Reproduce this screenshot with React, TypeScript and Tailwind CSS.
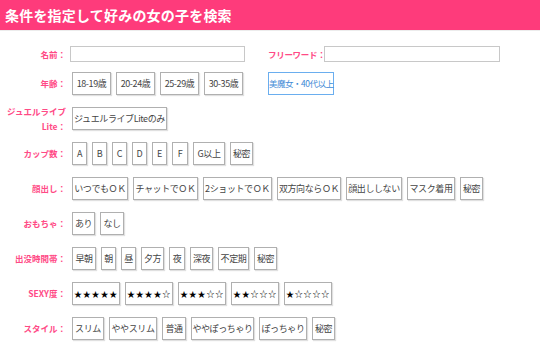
type Opt = { label: string; w: string };

const font = { fontFamily: '"Noto Sans CJK JP", "Noto Sans", sans-serif' };

const rows: { label: React.ReactNode; options: Opt[] }[] = [
  {
    label: (
      <>
        ジュエルライブ
        <br />
        Lite：
      </>
    ),
    options: [{ label: "ジュエルライブLiteのみ", w: "w-[95px]" }],
  },
  {
    label: "カップ数：",
    options: [
      { label: "A", w: "w-[15px]" },
      { label: "B", w: "w-[15px]" },
      { label: "C", w: "w-[15px]" },
      { label: "D", w: "w-[15px]" },
      { label: "E", w: "w-[15px]" },
      { label: "F", w: "w-[16px]" },
      { label: "G以上", w: "w-[32px]" },
      { label: "秘密", w: "w-[23px]" },
    ],
  },
  {
    label: "顔出し：",
    options: [
      { label: "いつでもＯＫ", w: "w-[56px]" },
      { label: "チャットでＯＫ", w: "w-[65px]" },
      { label: "2ショットでＯＫ", w: "w-[69px]" },
      { label: "双方向ならＯＫ", w: "w-[64px]" },
      { label: "顔出ししない", w: "w-[56px]" },
      { label: "マスク着用", w: "w-[48px]" },
      { label: "秘密", w: "w-[23px]" },
    ],
  },
  {
    label: "おもちゃ：",
    options: [
      { label: "あり", w: "w-[23px]" },
      { label: "なし", w: "w-[24px]" },
    ],
  },
  {
    label: "出没時間帯：",
    options: [
      { label: "早朝", w: "w-[24px]" },
      { label: "朝", w: "w-[15px]" },
      { label: "昼", w: "w-[15px]" },
      { label: "夕方", w: "w-[23px]" },
      { label: "夜", w: "w-[16px]" },
      { label: "深夜", w: "w-[23px]" },
      { label: "不定期", w: "w-[31px]" },
      { label: "秘密", w: "w-[23px]" },
    ],
  },
  {
    label: "SEXY度：",
    options: [
      { label: "★★★★★", w: "w-[48px]" },
      { label: "★★★★☆", w: "w-[48px]" },
      { label: "★★★☆☆", w: "w-[48px]" },
      { label: "★★☆☆☆", w: "w-[48px]" },
      { label: "★☆☆☆☆", w: "w-[48px]" },
    ],
  },
  {
    label: "スタイル：",
    options: [
      { label: "スリム", w: "w-[32px]" },
      { label: "ややスリム", w: "w-[48px]" },
      { label: "普通", w: "w-[24px]" },
      { label: "ややぽっちゃり", w: "w-[63px]" },
      { label: "ぽっちゃり", w: "w-[48px]" },
      { label: "秘密", w: "w-[23px]" },
    ],
  },
];

const ages = ["18-19歳", "20-24歳", "25-29歳", "30-35歳"];

function Label({ children }: { children: React.ReactNode }) {
  return (
    <div className="w-[66px] shrink-0 text-right text-[8.5px] font-bold leading-[15px] text-[#ff4a86] whitespace-nowrap">
      {children}
    </div>
  );
}

function Chip({ opt }: { opt: Opt }) {
  const star = opt.label.startsWith("★");
  return (
    <button
      className={`${opt.w} h-[23px] shrink-0 border border-[#b0b0b0] bg-white text-center text-[#444] whitespace-nowrap shadow-[1px_1px_1px_rgba(0,0,0,0.12)] ${
        star ? "text-[8px] tracking-[0.8px] text-black" : "text-[9px] tracking-[-0.4px]"
      }`}
    >
      {opt.label}
    </button>
  );
}

export default function App() {
  return (
    <div className="w-[540px] h-[344px] overflow-hidden bg-white" style={font}>
      <div className="h-[30px] bg-[#fe3b7b] border-b border-[#ececec] flex items-center px-[5px] box-content">
        <h1 className="text-[14px] font-bold text-white tracking-[0.2px]">
          条件を指定して好みの女の子を検索
        </h1>
      </div>

      <div className="pt-[15px] flex flex-col">
        <div className="flex items-center h-[16px]">
          <Label>名前：</Label>
          <input className="ml-[4px] w-[175px] h-[16px] border border-[#c8c8c8] bg-white" />
          <div className="ml-[23px] w-[56px] shrink-0 whitespace-nowrap text-[8.5px] font-bold tracking-[-0.3px] text-[#ff4a86]">
            フリーワード：
          </div>
          <input className="w-[176px] h-[16px] border border-[#c8c8c8] bg-white" />
        </div>

        <div className="flex items-center h-[23px] mt-[10px]">
          <Label>年齢：</Label>
          <div className="ml-[6px] flex gap-[5px]">
            {ages.map((a) => (
              <Chip key={a} opt={{ label: a, w: "w-[39px]" }} />
            ))}
          </div>
          <button className="ml-[25px] w-[66px] h-[23px] border border-[#6aaeef] bg-white text-[8.5px] tracking-[-0.5px] text-[#3f8ad6] whitespace-nowrap">
            美魔女・40代以上
          </button>
        </div>

        {rows.map((row, i) => (
          <div key={i} className="flex items-center h-[23px] mt-[12px]">
            <Label>{row.label}</Label>
            <div className="ml-[6px] flex gap-[5px]">
              {row.options.map((o) => (
                <Chip key={o.label} opt={o} />
              ))}
            </div>
          </div>
        ))}
      </div>
    </div>
  );
}
